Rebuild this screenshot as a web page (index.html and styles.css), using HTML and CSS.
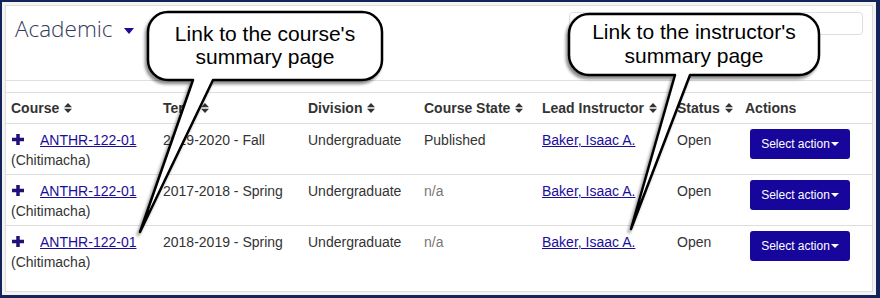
FILE: index.html
```html
<!DOCTYPE html>
<html lang="en">
<head>
<meta charset="utf-8">
<title>Academic</title>
<link rel="stylesheet" href="styles.css">
</head>
<body>
<div class="frame">
  <div class="card">
    <div class="card-head">
      <div class="title">Academic<span class="caret"></span></div>
      <input class="search" type="text" aria-label="Search">
    </div>
    <table class="grid">
      <colgroup>
        <col class="w-course"><col class="w-term"><col class="w-div"><col class="w-state"><col class="w-inst"><col class="w-status"><col class="w-act">
      </colgroup>
      <thead>
        <tr>
          <th>Course <svg class="sort" viewBox="0 0 8 10" width="8" height="10"><path d="M0 4.3 L4 0 L8 4.3 Z M0 5.7 L4 10 L8 5.7 Z"/></svg></th>
          <th>Term <svg class="sort" viewBox="0 0 8 10" width="8" height="10"><path d="M0 4.3 L4 0 L8 4.3 Z M0 5.7 L4 10 L8 5.7 Z"/></svg></th>
          <th>Division <svg class="sort" viewBox="0 0 8 10" width="8" height="10"><path d="M0 4.3 L4 0 L8 4.3 Z M0 5.7 L4 10 L8 5.7 Z"/></svg></th>
          <th>Course State <svg class="sort" viewBox="0 0 8 10" width="8" height="10"><path d="M0 4.3 L4 0 L8 4.3 Z M0 5.7 L4 10 L8 5.7 Z"/></svg></th>
          <th>Lead Instructor <svg class="sort" viewBox="0 0 8 10" width="8" height="10"><path d="M0 4.3 L4 0 L8 4.3 Z M0 5.7 L4 10 L8 5.7 Z"/></svg></th>
          <th>Status <svg class="sort" viewBox="0 0 8 10" width="8" height="10"><path d="M0 4.3 L4 0 L8 4.3 Z M0 5.7 L4 10 L8 5.7 Z"/></svg></th>
          <th>Actions</th>
        </tr>
      </thead>
      <tbody>
        <tr>
          <td><svg class="plus" viewBox="0 0 12 11" width="12" height="11"><rect x="0" y="3.75" width="12" height="3.5"/><rect x="4.25" y="0" width="3.5" height="11"/></svg><a href="#">ANTHR-122-01</a><br>(Chitimacha)</td>
          <td>2019-2020 - Fall</td>
          <td>Undergraduate</td>
          <td>Published</td>
          <td><a href="#">Baker, Isaac A.</a></td>
          <td>Open</td>
          <td class="act"><button class="btn" type="button">Select action<span class="btn-caret"></span></button></td>
        </tr>
        <tr>
          <td><svg class="plus" viewBox="0 0 12 11" width="12" height="11"><rect x="0" y="3.75" width="12" height="3.5"/><rect x="4.25" y="0" width="3.5" height="11"/></svg><a href="#">ANTHR-122-01</a><br>(Chitimacha)</td>
          <td>2017-2018 - Spring</td>
          <td>Undergraduate</td>
          <td class="muted">n/a</td>
          <td><a href="#">Baker, Isaac A.</a></td>
          <td>Open</td>
          <td class="act"><button class="btn" type="button">Select action<span class="btn-caret"></span></button></td>
        </tr>
        <tr>
          <td><svg class="plus" viewBox="0 0 12 11" width="12" height="11"><rect x="0" y="3.75" width="12" height="3.5"/><rect x="4.25" y="0" width="3.5" height="11"/></svg><a href="#">ANTHR-122-01</a><br>(Chitimacha)</td>
          <td>2018-2019 - Spring</td>
          <td>Undergraduate</td>
          <td class="muted">n/a</td>
          <td><a href="#">Baker, Isaac A.</a></td>
          <td>Open</td>
          <td class="act"><button class="btn" type="button">Select action<span class="btn-caret"></span></button></td>
        </tr>
      </tbody>
    </table>
  </div>
</div>

<svg class="callouts" viewBox="0 0 880 298" width="880" height="298" aria-hidden="true">
  <defs>
    <filter id="shadow" x="-10%" y="-10%" width="120%" height="130%">
      <feDropShadow dx="-2" dy="3" stdDeviation="1.6" flood-color="#000" flood-opacity="0.45"/>
    </filter>
  </defs>
  <path class="bubble" filter="url(#shadow)" d="M168,12 H362 A20,20 0 0 1 382,32 V60 A20,20 0 0 1 362,80 H213 L140,232 L193,80 H168 A20,20 0 0 1 148,60 V32 A20,20 0 0 1 168,12 Z"/>
  <path class="bubble" filter="url(#shadow)" d="M589,14 H799 A20,20 0 0 1 819,34 V55 A20,20 0 0 1 799,75 H690 L631,229 L675,75 H589 A20,20 0 0 1 569,55 V34 A20,20 0 0 1 589,14 Z"/>
</svg>
<div class="note note-course">Link to the course's<br>summary page</div>
<div class="note note-inst">Link to the instructor's<br>summary page</div>
</body>
</html>
```

FILE: styles.css
```css
html, body {
  margin: 0;
  padding: 0;
}

body {
  width: 880px;
  height: 298px;
  overflow: hidden;
  font-family: "Liberation Sans", Arial, sans-serif;
  color: #333;
  background: #f3f3f3;
}

.frame {
  box-sizing: border-box;
  width: 880px;
  height: 298px;
  border-style: solid;
  border-color: #14245a;
  border-width: 2px 4px 3px 2px;
  background: #f3f3f3;
  padding: 3px;
}

.card {
  box-sizing: border-box;
  width: 868px;
  height: 287px;
  background: #fff;
  border: 1px solid #dcdcdc;
}

.card-head {
  height: 74px;
  border-bottom: 1px solid #e0e0e0;
  display: flex;
  justify-content: space-between;
  align-items: flex-start;
  padding: 0 9px;
}

.title {
  margin-top: 7px;
  font-family: "Open Sans", sans-serif;
  font-weight: 300;
  font-size: 22.5px;
  line-height: 31px;
  color: #353a5c;
}

.caret {
  display: inline-block;
  width: 0;
  height: 0;
  margin-left: 11px;
  vertical-align: 3px;
  border-top: 6px solid #1a0a9a;
  border-left: 5.5px solid transparent;
  border-right: 5.5px solid transparent;
}

.search {
  box-sizing: border-box;
  margin-top: 6px;
  width: 294px;
  height: 23px;
  border: 1px solid #dedede;
  border-radius: 4px;
  background: #fff;
  padding: 0;
}

.grid {
  margin-top: 11px;
  width: 866px;
  table-layout: fixed;
  border-collapse: separate;
  border-spacing: 0;
  font-size: 14px;
  line-height: 20px;
}

.w-course { width: 152px; }
.w-term { width: 145px; }
.w-div { width: 116px; }
.w-state { width: 118px; }
.w-inst { width: 135px; }
.w-status { width: 68px; }
.w-act { width: 132px; }

.grid th {
  text-align: left;
  font-weight: bold;
  color: #333;
  padding: 5px 5px 5px;
  border-top: 1px solid #dedede;
  white-space: nowrap;
}

.sort {
  fill: #333;
  vertical-align: baseline;
  margin-left: 1px;
}

.grid td {
  vertical-align: top;
  padding: 6px 5px 4px;
  height: 40px;
  border-top: 1px solid #dedede;
  white-space: nowrap;
  color: #333;
}

.grid td.act {
  padding-top: 5px;
  padding-bottom: 5px;
  height: 40px;
}

.grid a {
  color: #1b0c9a;
  text-decoration: underline;
}

.muted {
  color: #777 !important;
}

.plus {
  fill: #20127a;
  vertical-align: baseline;
  margin-left: 1px;
  margin-right: 16px;
}

.btn {
  display: inline-flex;
  align-items: center;
  justify-content: center;
  box-sizing: border-box;
  margin-left: 5px;
  width: 100px;
  height: 30px;
  padding: 0;
  border: 0;
  border-radius: 3px;
  background: #16069b;
  color: #fff;
  font-family: "Liberation Sans", Arial, sans-serif;
  font-size: 12px;
}

.btn-caret {
  display: inline-block;
  width: 0;
  height: 0;
  margin-left: 1px;
  border-top: 4px solid #fff;
  border-left: 4px solid transparent;
  border-right: 4px solid transparent;
}

.callouts {
  position: absolute;
  left: 0;
  top: 0;
  pointer-events: none;
}

.bubble {
  fill: #fff;
  stroke: #000;
  stroke-width: 2.5;
  stroke-linejoin: round;
}

.note {
  position: absolute;
  text-align: center;
  font-family: "Liberation Sans", Arial, sans-serif;
  font-size: 21px;
  color: #000;
  white-space: nowrap;
}

.note-course {
  left: 147px;
  width: 236px;
  top: 21.5px;
  line-height: 23px;
}

.note-inst {
  left: 568px;
  width: 252px;
  top: 20px;
  line-height: 23.5px;
}
```
